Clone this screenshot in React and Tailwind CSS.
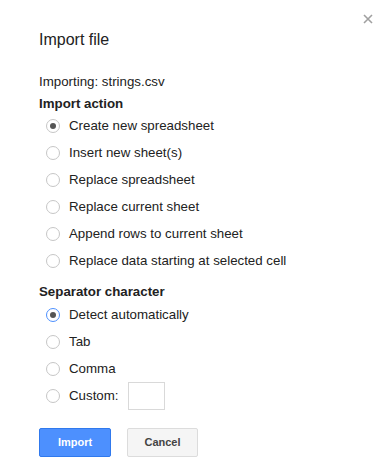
import { useState } from 'react';

const actions = [
  'Create new spreadsheet',
  'Insert new sheet(s)',
  'Replace spreadsheet',
  'Replace current sheet',
  'Append rows to current sheet',
  'Replace data starting at selected cell',
];

const separators = ['Detect automatically', 'Tab', 'Comma'];

function Radio({ checked, focused }) {
  return (
    <span
      className={`flex h-[14px] w-[14px] shrink-0 items-center justify-center rounded-full border bg-white ${
        focused ? 'border-[#4d90fe]' : 'border-[#c6c6c6]'
      }`}
    >
      {checked && <span className="h-[6px] w-[6px] rounded-full bg-[#555]" />}
    </span>
  );
}

function Option({ label, checked, focused, onClick, children }) {
  return (
    <div className="flex h-[27px] cursor-pointer items-center pl-[7px]" onClick={onClick}>
      <Radio checked={checked} focused={focused} />
      <span className="ml-[9px] text-[13.3px] leading-4 text-[#222]">{label}</span>
      {children}
    </div>
  );
}

export default function App() {
  const [action, setAction] = useState(0);
  const [sep, setSep] = useState(0);

  return (
    <div
      className="relative h-[473px] w-[391px] bg-white pl-[39px] pt-[30px]"
      style={{ fontFamily: '"Liberation Sans", Arial, sans-serif' }}
    >
      {/* Close */}
      <svg className="absolute right-[18px] top-[14px]" width="10" height="10" viewBox="0 0 10 10">
        <path d="M1 1L9 9M9 1L1 9" stroke="#a0a0a0" strokeWidth="1.6" />
      </svg>

      <div className="text-[16px] leading-5 text-[#222]">Import file</div>

      <div className="mt-[24px] text-[13.3px] leading-4 text-[#222]">Importing: strings.csv</div>

      <div className="mt-[6px] text-[13.3px] font-bold leading-4 text-[#222]">Import action</div>
      <div className="flex flex-col">
        {actions.map((a, i) => (
          <Option key={a} label={a} checked={action === i} onClick={() => setAction(i)} />
        ))}
      </div>

      <div className="mt-[10px] text-[13.3px] font-bold leading-4 text-[#222]">Separator character</div>
      <div className="mt-[1px] flex flex-col">
        {separators.map((s, i) => (
          <Option key={s} label={s} checked={sep === i} focused={i === 0} onClick={() => setSep(i)} />
        ))}
        <div className="flex h-[28px] items-center pl-[7px]" onClick={() => setSep(3)}>
          <Radio checked={sep === 3} />
          <span className="ml-[9px] text-[13.3px] leading-4 text-[#222]">Custom:</span>
          <input className="ml-[9px] h-[28px] w-[37px] border border-[#d9d9d9] bg-white outline-none" />
        </div>
      </div>

      <div className="mt-[18px] flex gap-[16px]">
        <button className="h-[29px] w-[72px] rounded-[2px] border border-[#3079ed] bg-[#4d90fe] text-[11px] font-bold text-white">
          Import
        </button>
        <button className="h-[29px] w-[71px] rounded-[2px] border border-[#dcdcdc] bg-[#f5f5f5] text-[11px] font-bold text-[#444]">
          Cancel
        </button>
      </div>
    </div>
  );
}
